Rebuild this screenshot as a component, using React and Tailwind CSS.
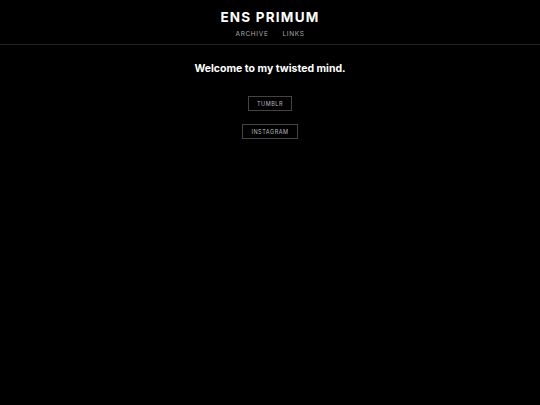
import React from "react";

const links = ["Tumblr", "Instagram"];

export default function App() {
  return (
    <div
      className="min-h-screen bg-black text-white"
      style={{ fontFamily: "Inter, 'Noto Sans', sans-serif" }}
    >
      <header className="border-b border-[#222] pt-[9px] pb-[6px] text-center">
        <h1 className="text-[13.5px] font-bold leading-[16px] tracking-[0.09em]">ENS PRIMUM</h1>
        <nav className="mt-[5px] flex justify-center gap-[14px] text-[6.5px] leading-[8px] tracking-[0.1em] text-[#aaa]">
          <a>ARCHIVE</a>
          <a>LINKS</a>
        </nav>
      </header>
      <main className="flex flex-col items-center">
        <h2 className="mt-[18px] text-[10.5px] font-bold leading-[12px]">Welcome to my twisted mind.</h2>
        <div className="mt-[21px] flex flex-col items-center gap-[13px]">
          {links.map((l) => (
            <a
              key={l}
              className="border border-[#444] px-[8px] py-[3.5px] text-[5.5px] leading-[6px] uppercase tracking-[0.1em] text-[#bbb]"
            >
              {l}
            </a>
          ))}
        </div>
      </main>
    </div>
  );
}
